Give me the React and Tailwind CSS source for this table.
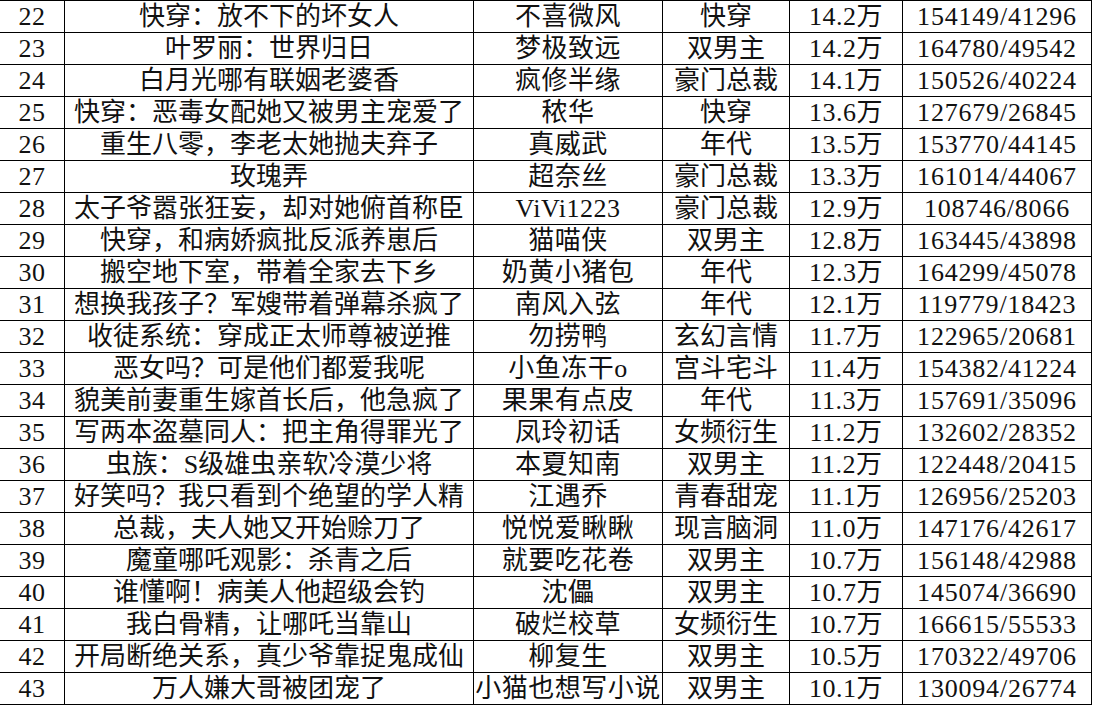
import React from "react";

const rows = [
  [22, "快穿：放不下的坏女人", "不喜微风", "快穿", "14.2万", "154149/41296"],
  [23, "叶罗丽：世界归日", "梦极致远", "双男主", "14.2万", "164780/49542"],
  [24, "白月光哪有联姻老婆香", "疯修半缘", "豪门总裁", "14.1万", "150526/40224"],
  [25, "快穿：恶毒女配她又被男主宠爱了", "秾华", "快穿", "13.6万", "127679/26845"],
  [26, "重生八零，李老太她抛夫弃子", "真威武", "年代", "13.5万", "153770/44145"],
  [27, "玫瑰弄", "超奈丝", "豪门总裁", "13.3万", "161014/44067"],
  [28, "太子爷嚣张狂妄，却对她俯首称臣", "ViVi1223", "豪门总裁", "12.9万", "108746/8066"],
  [29, "快穿，和病娇疯批反派养崽后", "猫喵侠", "双男主", "12.8万", "163445/43898"],
  [30, "搬空地下室，带着全家去下乡", "奶黄小猪包", "年代", "12.3万", "164299/45078"],
  [31, "想换我孩子？军嫂带着弹幕杀疯了", "南风入弦", "年代", "12.1万", "119779/18423"],
  [32, "收徒系统：穿成正太师尊被逆推", "勿捞鸭", "玄幻言情", "11.7万", "122965/20681"],
  [33, "恶女吗？可是他们都爱我呢", "小鱼冻干o", "宫斗宅斗", "11.4万", "154382/41224"],
  [34, "貌美前妻重生嫁首长后，他急疯了", "果果有点皮", "年代", "11.3万", "157691/35096"],
  [35, "写两本盗墓同人：把主角得罪光了", "凤玲初话", "女频衍生", "11.2万", "132602/28352"],
  [36, "虫族：S级雄虫亲软冷漠少将", "本夏知南", "双男主", "11.2万", "122448/20415"],
  [37, "好笑吗？我只看到个绝望的学人精", "江遇乔", "青春甜宠", "11.1万", "126956/25203"],
  [38, "总裁，夫人她又开始赊刀了", "悦悦爱瞅瞅", "现言脑洞", "11.0万", "147176/42617"],
  [39, "魔童哪吒观影：杀青之后", "就要吃花卷", "双男主", "10.7万", "156148/42988"],
  [40, "谁懂啊！病美人他超级会钓", "沈儡", "双男主", "10.7万", "145074/36690"],
  [41, "我白骨精，让哪吒当靠山", "破烂校草", "女频衍生", "10.7万", "166615/55533"],
  [42, "开局断绝关系，真少爷靠捉鬼成仙", "柳复生", "双男主", "10.5万", "170322/49706"],
  [43, "万人嫌大哥被团宠了", "小猫也想写小说", "双男主", "10.1万", "130094/26774"],
];

const cell =
  "h-[31px] flex items-center justify-center border-r border-black whitespace-nowrap overflow-hidden";

export default function App() {
  return (
    <div
      className="w-[1093px] h-[708px] bg-white text-[#111] overflow-hidden"
      style={{ fontFamily: '"Liberation Serif", "Noto Sans CJK SC", serif' }}
    >
      <div className="w-[1092px] border-t border-black">
        {rows.map((r) => (
          <div
            key={r[0]}
            className="grid grid-cols-[65px_409px_189px_127px_113px_189px] border-b border-black text-[26px] leading-none"
          >
            <div className={cell + " tracking-[0.5px]"}>{r[0]}</div>
            <div className={cell}>{r[1]}</div>
            <div className={cell + " tracking-[0.5px]"}>{r[2]}</div>
            <div className={cell}>{r[3]}</div>
            <div className={cell + " tracking-[0.5px]"}>{r[4]}</div>
            <div className={cell + " tracking-[0.8px]"}>{r[5]}</div>
          </div>
        ))}
      </div>
    </div>
  );
}
